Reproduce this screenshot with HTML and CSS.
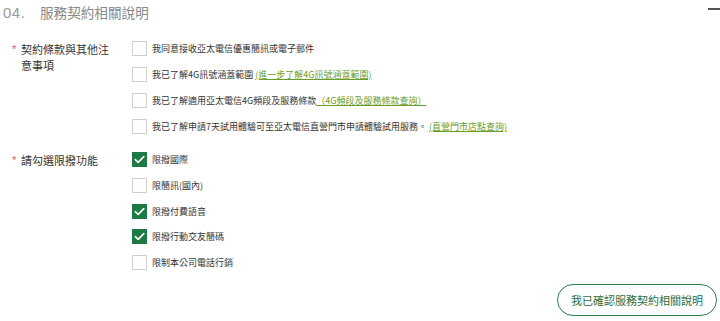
FILE: index.html
```html
<!DOCTYPE html>
<html lang="zh-Hant">
<head>
<meta charset="utf-8">
<title>服務契約相關說明</title>
<link rel="stylesheet" href="styles.css">
</head>
<body>
<div class="page">
  <div class="header">
    <div class="heading"><span class="num">04.</span><span class="title">服務契約相關說明</span></div>
    <span class="collapse"></span>
  </div>

  <div class="group first">
    <div class="label"><span class="req">*</span><span class="label-text">契約條款與其他注意事項</span></div>
    <div class="options">
      <div class="opt"><span class="box"></span><span class="txt">我同意接收亞太電信優惠簡訊或電子郵件</span></div>
      <div class="opt"><span class="box"></span><span class="txt">我已了解4G訊號涵蓋範圍 <a class="link" href="#">(進一步了解4G訊號涵蓋範圍)</a></span></div>
      <div class="opt"><span class="box"></span><span class="txt">我已了解適用亞太電信4G頻段及服務條款<a class="link" href="#">（4G頻段及服務條款查詢）</a></span></div>
      <div class="opt"><span class="box"></span><span class="txt">我已了解申請7天試用體驗可至亞太電信直營門市申請體驗試用服務。 <a class="link" href="#">(直營門市店點查詢)</a></span></div>
    </div>
  </div>

  <div class="group second">
    <div class="label"><span class="req">*</span><span class="label-text">請勾選限撥功能</span></div>
    <div class="options">
      <div class="opt"><span class="box checked"><svg viewBox="0 0 15 15" width="15" height="15"><path d="M3.3 7.6 L6.2 10.4 L11.8 4.6" fill="none" stroke="#fff" stroke-width="1.6" stroke-linecap="round" stroke-linejoin="round"/></svg></span><span class="txt">限撥國際</span></div>
      <div class="opt"><span class="box"></span><span class="txt">限簡訊(國內)</span></div>
      <div class="opt"><span class="box checked"><svg viewBox="0 0 15 15" width="15" height="15"><path d="M3.3 7.6 L6.2 10.4 L11.8 4.6" fill="none" stroke="#fff" stroke-width="1.6" stroke-linecap="round" stroke-linejoin="round"/></svg></span><span class="txt">限撥付費語音</span></div>
      <div class="opt"><span class="box checked"><svg viewBox="0 0 15 15" width="15" height="15"><path d="M3.3 7.6 L6.2 10.4 L11.8 4.6" fill="none" stroke="#fff" stroke-width="1.6" stroke-linecap="round" stroke-linejoin="round"/></svg></span><span class="txt">限撥行動交友簡碼</span></div>
      <div class="opt"><span class="box"></span><span class="txt">限制本公司電話行銷</span></div>
    </div>
  </div>

  <div class="actions">
    <button class="confirm" type="button">我已確認服務契約相關說明</button>
  </div>
</div>
</body>
</html>
```

FILE: styles.css
```css
html, body {
  margin: 0;
  padding: 0;
  background: #fff;
}
.page {
  width: 720px;
  height: 321px;
  overflow: hidden;
  font-family: "Noto Sans CJK TC", "Liberation Sans", sans-serif;
  color: #333;
}
.header {
  display: flex;
  justify-content: space-between;
  align-items: flex-start;
  height: 25px;
  padding-left: 3px;
}
.heading {
  display: flex;
  align-items: center;
  height: 25px;
}
.num {
  font-family: "Liberation Sans", sans-serif;
  font-size: 15px;
  color: #999;
  width: 37px;
  letter-spacing: 0.5px;
}
.title {
  font-size: 13.6px;
  color: #888;
  line-height: 1;
}
.collapse {
  display: block;
  width: 12px;
  height: 2px;
  background: #555;
  margin-top: 8px;
}
.group {
  display: grid;
  grid-template-columns: 132px 1fr;
}
.group.first {
  margin-top: 16px;
}
.group.second {
  margin-top: 18px;
}
.label {
  display: flex;
  align-items: flex-start;
  padding-left: 12px;
  padding-top: 0;
}
.req {
  color: #e0565b;
  font-family: "Liberation Sans", sans-serif;
  font-size: 11px;
  width: 9px;
  line-height: 16px;
}
.label-text {
  font-size: 11px;
  line-height: 16px;
  width: 90px;
  color: #333;
}
.options {
  display: flex;
  flex-direction: column;
  gap: 11px;
}
.second .options {
  gap: 10.8px;
}
.opt {
  display: flex;
  align-items: center;
  height: 15px;
}
.box {
  display: block;
  box-sizing: border-box;
  width: 15px;
  height: 15px;
  border: 1px solid #d0d0d0;
  background: #fff;
  margin-right: 5px;
  flex: none;
}
.box.checked {
  background: #1e7a45;
  border-color: #1e7a45;
  position: relative;
}
.box.checked svg {
  position: absolute;
  left: -1px;
  top: -1px;
}
.txt {
  font-size: 9px;
  line-height: 15px;
  color: #333;
  white-space: nowrap;
}
.link {
  color: #6a9c2c;
  text-decoration: underline;
}
.actions {
  display: flex;
  justify-content: flex-end;
  margin-top: 14px;
  padding-right: 3px;
}
.confirm {
  box-sizing: border-box;
  width: 160px;
  height: 32px;
  border: 1.5px solid #2e7d50;
  border-radius: 16px;
  background: #fff;
  color: #2a6e45;
  font-family: "Noto Sans CJK TC", sans-serif;
  font-size: 11px;
  padding: 0;
  cursor: pointer;
}
```
